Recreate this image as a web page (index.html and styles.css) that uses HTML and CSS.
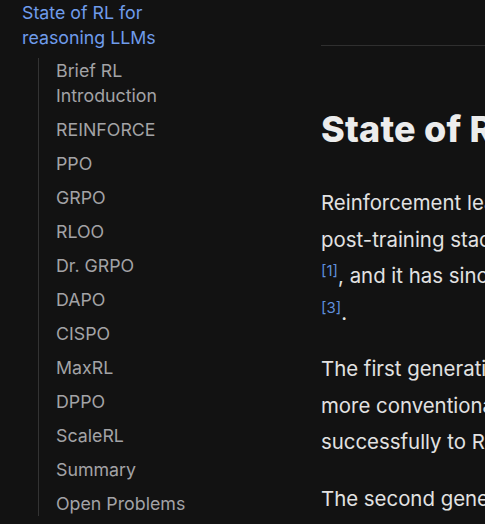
FILE: index.html
```html
<!DOCTYPE html>
<html lang="en">
<head>
<meta charset="utf-8">
<title>State of RL for reasoning LLMs</title>
<link rel="stylesheet" href="styles.css">
</head>
<body>
<div class="page">
  <aside class="sidebar">
    <nav class="toc">
      <a class="toc-top" href="#state">State of RL for reasoning LLMs</a>
      <ul class="toc-list">
        <li><a href="#intro">Brief RL Introduction</a></li>
        <li><a href="#reinforce">REINFORCE</a></li>
        <li><a href="#ppo">PPO</a></li>
        <li><a href="#grpo">GRPO</a></li>
        <li><a href="#rloo">RLOO</a></li>
        <li><a href="#drgrpo">Dr. GRPO</a></li>
        <li><a href="#dapo">DAPO</a></li>
        <li><a href="#cispo">CISPO</a></li>
        <li><a href="#maxrl">MaxRL</a></li>
        <li><a href="#dppo">DPPO</a></li>
        <li><a href="#scalerl">ScaleRL</a></li>
        <li><a href="#summary">Summary</a></li>
        <li><a href="#open">Open Problems</a></li>
      </ul>
    </nav>
  </aside>
  <main class="content">
    <article class="article">
      <h1 id="state" class="title">State of RL for reasoning LLMs</h1>
      <p>Reinforcement learning (RL) has become an essential part of the LLM<br>post-training stack, starting with OpenAI's o1 and DeepSeek-R1 <sup><a href="#r2">[2]</a></sup><br><sup><a href="#r1">[1]</a></sup>, and it has since become the main driver of reasoning progress <sup><a href="#r2">[2]</a></sup><br><sup><a href="#r3">[3]</a></sup>.</p>
      <p>The first generation of RL algorithms for LLMs were adapted from<br>more conventional deep RL methods, such as PPO, which had been applied<br>successfully to RLHF.</p>
      <p>The second generation of algorithms removed the learned critic.</p>
    </article>
  </main>
</div>
</body>
</html>
```

FILE: styles.css
```css
html, body {
  margin: 0;
  padding: 0;
  overflow: hidden;
  background: #121212;
}

body {
  font-family: Inter, "Noto Sans", "Liberation Sans", sans-serif;
  color: #e4e4e4;
  height: 524px;
}

a {
  text-decoration: none;
  color: inherit;
}

.page {
  display: flex;
  align-items: flex-start;
  width: 1300px;
}

.sidebar {
  flex: 0 0 auto;
  width: 178px;
  padding-left: 22px;
  padding-right: 121px;
}

.toc {
  display: flex;
  flex-direction: column;
  font-size: 17.8px;
  line-height: 25px;
}

.toc-top {
  color: #6f9ceb;
}

.toc-list {
  list-style: none;
  margin: 8px 0 0 16px;
  padding: 0 0 0 17px;
  border-left: 1px solid #333333;
  display: flex;
  flex-direction: column;
  gap: 9px;
}

.toc-list a {
  color: #a3a3a6;
}

.content {
  flex: 0 0 auto;
  width: 960px;
  margin-top: 45px;
  border-top: 1px solid #2f2f2f;
}

.article {
  padding-top: 63px;
}

.title {
  margin: 0 0 35px 0;
  font-size: 36px;
  line-height: 41px;
  font-weight: 800;
  letter-spacing: 0.2px;
  color: #ececec;
}

.article p {
  margin: 0 0 20px 0;
  font-size: 20.4px;
  line-height: 36.5px;
  color: #e2e2e2;
}

.article sup {
  font-size: 15px;
  line-height: 0;
  vertical-align: 0.45em;
}

.article sup a {
  color: #5f8fdc;
}
```
